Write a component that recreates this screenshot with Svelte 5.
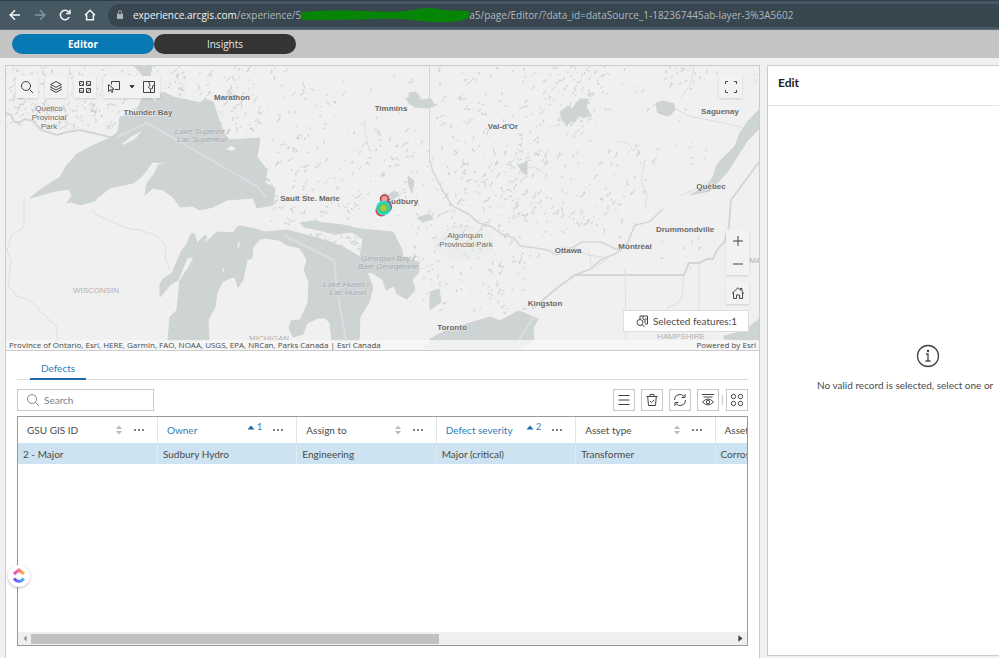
<script>
  const columns = [
    { name: 'GSU GIS ID', value: '2 - Major' },
    { name: 'Owner', value: 'Sudbury Hydro', order: 1 },
    { name: 'Assign to', value: 'Engineering' },
    { name: 'Defect severity', value: 'Major (critical)', order: 2 },
    { name: 'Asset type', value: 'Transformer' },
    { name: 'Asset', value: 'Corrosion' }
  ];

  const labels = [
    { x: 232, y: 100, text: 'Marathon' },
    { x: 148, y: 115, text: 'Thunder Bay' },
    { x: 391, y: 111, text: 'Timmins' },
    { x: 503, y: 129, text: "Val-d'Or" },
    { x: 720, y: 114, text: 'Saguenay' },
    { x: 711, y: 189, text: 'Québec' },
    { x: 310, y: 201, text: 'Sault Ste. Marie' },
    { x: 402, y: 204, text: 'Sudbury' },
    { x: 685, y: 232, text: 'Drummondville' },
    { x: 635, y: 249, text: 'Montréal' },
    { x: 568, y: 253, text: 'Ottawa' },
    { x: 545, y: 306, text: 'Kingston' },
    { x: 452, y: 330, text: 'Toronto' },
    { x: 439, y: 349, text: 'Hamilton', kind: 'state' },
    { x: 96, y: 293, text: 'WISCONSIN', kind: 'state' },
    { x: 681, y: 339, text: 'HAMPSHIRE', kind: 'state' },
    { x: 762, y: 263, text: 'MAINE', kind: 'state' },
    { x: 269, y: 341, text: 'MICHIGAN', kind: 'state' },
    { x: 49, y: 111, text: 'Quetico', kind: 'park' },
    { x: 49, y: 120, text: 'Provincial', kind: 'park' },
    { x: 49, y: 129, text: 'Park', kind: 'park' },
    { x: 465, y: 238, text: 'Algonquin', kind: 'park' },
    { x: 466, y: 247, text: 'Provincial Park', kind: 'park' },
    { x: 202, y: 134, text: 'Lake Superior /', kind: 'water' },
    { x: 202, y: 142, text: 'Lac Supérieur', kind: 'water' },
    { x: 388, y: 261, text: 'Georgian Bay /', kind: 'water' },
    { x: 388, y: 269, text: 'Baie Georgienne', kind: 'water' },
    { x: 346, y: 287, text: 'Lake Huron /', kind: 'water' },
    { x: 348, y: 295, text: 'Lac Huron', kind: 'water' }
  ];

  // Small inland lakes: [x, y, width, height, count]
  const areas = [
    [6, 67, 155, 46, 150], [6, 104, 112, 26, 80], [165, 67, 90, 32, 60],
    [218, 95, 45, 38, 40], [252, 67, 175, 65, 45], [262, 130, 170, 60, 100],
    [270, 188, 150, 34, 80], [300, 232, 62, 18, 60], [430, 67, 160, 75, 100],
    [435, 142, 110, 70, 140], [540, 67, 70, 60, 70], [500, 145, 150, 80, 110],
    [410, 212, 130, 50, 80], [418, 262, 110, 50, 65], [620, 67, 138, 30, 35],
    [645, 105, 65, 60, 20], [540, 210, 90, 30, 30], [660, 235, 60, 35, 10]
  ];

  let seed = 77;
  function rnd() {
    seed = (seed * 16807) % 2147483647;
    return seed / 2147483647;
  }

  let ponds = '';
  for (const [ax, ay, w, h, n] of areas) {
    for (let i = 0; i < n; i++) {
      ponds += `M${(ax + rnd() * w).toFixed(1)} ${(ay + rnd() * h).toFixed(1)}`;
      const steps = 1 + Math.floor(rnd() * rnd() * 5);
      for (let k = 0; k < steps; k++) {
        ponds += `l${(rnd() * 4 - 1.3).toFixed(1)} ${(rnd() * 5 - 3.2).toFixed(1)}`;
      }
    }
  }
</script>

<div class="page">
  <header class="browser">
    <nav class="history" aria-label="Browser">
      <button aria-label="Back"><svg viewBox="0 0 12 12"><path d="M11 6H1.5M6 1.2 1.2 6 6 10.8" /></svg></button>
      <button class="dim" aria-label="Forward"><svg viewBox="0 0 12 12"><path d="M1 6h9.5M6 1.2 10.8 6 6 10.8" /></svg></button>
      <button aria-label="Reload"><svg viewBox="0 0 12 12"><path d="M10.3 8A4.7 4.7 0 1 1 9.5 2.7L11 4.2M11 .7v3.8H7.2" /></svg></button>
      <button aria-label="Home"><svg viewBox="0 0 12 12"><path d="M1 6.2 6 1.3l5 4.9M2.6 5.3v5.5h6.8V5.3" /></svg></button>
    </nav>
    <div class="address">
      <svg class="lock" viewBox="0 0 8 10"><path d="M1 4h6v5H1z" fill="#aeb5b9" /><path d="M2.3 4V2.5a1.7 1.7 0 0 1 3.4 0V4" fill="none" stroke="#aeb5b9" /></svg>
      <span><b>experience.arcgis.com</b>/experience/5</span>
      <svg class="scribble" viewBox="0 0 168 16"><path d="M1 5Q30 2 63 4T112 3Q127-1 142 3L168 4Q172 10 163 13Q145 17 120 14Q102 11 74 12T2 13Q-3 8 1 5Z" fill="#078507" /></svg>
      <span>a5/page/Editor/?data_id=dataSource_1-182367445ab-layer-3%3A5602</span>
    </div>
  </header>

  <nav class="tabs" aria-label="Pages">
    <a class="active" href="#editor">Editor</a>
    <a href="#insights">Insights</a>
  </nav>

  <main>
    <section class="left">
      <div class="map">
        <svg class="canvas" viewBox="6 66 753 284" preserveAspectRatio="xMidYMid slice" role="img" aria-label="Map of the Great Lakes">
          <ellipse cx="465" cy="243" rx="31" ry="18" fill="#ebeeec" />
          <path class="ponds" d={ponds} />
          <g class="border">
            <path d="M429.500 66V160" stroke-width="1" />
            <path d="M429.500 160l3 10 10 20 10 16 16 8 10 9 12 3 11 8 12 4 7 8 15 2 12 2 9 5 12-5 13-8 20 0 12 6 8 3" stroke-width="1.500" />
            <path d="M6 113l5 2 3 7 6 0 5-3 8 2 8 9 16 5 10-3 13-2 30 7 16-2 14-6 17-9 8 4 105 57" />
            <path d="M532 309l25-21 18-13 109 0 5-12 10 0 8-4 6 0 4-9 8-9 4-15 2-26 25-34 5-5" />
            <path d="M575 275l15-6 12-10 13-5 12-10 8-19 14-3 14-13" stroke-width="1.500" />
          </g>
          <g class="border thin">
            <path d="M24 198v29l-13 9-4 15 4 10-3 25 9 10 14 5 12 13 14 13v16M92 210l4 5 34 14 10 1 17 6 9 10-1 12 5 12M625 269l1 70M699 263v77M684 275l-2 22-6 8-8 2v34" />
            <path d="M560 247l15 1 13 7 20 3-16 12-3-18M694 66l-4 20-10 12M674 108l15 8 20 4 24 5 8 2M617 141l12 2 4 8 9-8M645 160l-4 20 6 15-2 14M365 120l0 12 4 18M520 168l15-1 10 7M680 196l18-8 8-6" />
          </g>
          <g class="lake">
            <path d="M30 198 44 187 60 177 67 165 77 154 92 146 110 138 118 132 120 117 136 112 143 97 150 95 154 102 163 92 173 97 187 100 200 103 205 99 213 102 220 123 225 135 230 140 260 138 257 157 267 170 265 183 275 188 273 205 257 208 253 198 227 200 213 207 200 210 192 206 180 207 173 197 163 190 153 188 145 195 147 183 155 173 158 165 168 163 152 162 147 170 140 178 133 183 110 188 97 198 95 201 80 205 71 202 67 203 72 196 69 189 55 191Z" />
            <path d="M168 341 170 317 177 310 180 280 189 267 194 257 187 258 178 280 170 285 160 297 160 284 163 279 172 273 182 250 187 244 191 234 194 233 197 243 205 235 207 237 203 245 217 232 233 233 238 226 260 232 262 237 253 247 252 258 247 260 243 280 238 287 235 277 230 278 222 282 217 293 215 307 208 320 209 341Z" />
            <path d="M240 226 256 229 265 232 287 230 310 236 330 242 345 248 360 257 363 239 352 232 335 234 318 230 304 227 300 223 313 221 325 223 343 225 360 229 393 232 402 250 403 258 419 262 419 272 412 280 415 290 407 299 397 294 394 286 386 290 383 280 373 273 367 272 373 287 369 302 360 317 359 341H332L330 323 325 318 318 318 307 323 303 334 293 337 289 328 291 321 300 320 308 303 309 282 304 270 307 260 300 248 287 245 279 240 265 238 257 240Z" />
            <path d="M428 350 430 339 447 330 470 323 490 317 500 321 518 311 524 313 538 319 533 328 534 340 519 350ZM430 292 439 289 441 302 430 310Z" />
            <path d="M759 110 748 121 740 133 735 146 721 160 717 165 714 175 709 183 696 192 690 195 710 191 728 171 740 152 748 140 759 129Z" />
            <path d="M409 93l6-1 4 3 0 5 12-1 3 5 3 1-9 3-12-1-6-3-4-5 3-2zM656 103l8-2 10 3 1 6-7 6-10-3zM134 66h18l-2 10-5 4-5-8zM724 336l20-5 15-12v22l-35-2zM560 112l8-6 4 3 8-10 8 0-2 9 5 7-8 3-4-4-4 8-5-1-3 5-5-7zM519 166l8-5 0 14-5-3zM408 176l6 5-2 12-3-7zM417 218l12-4 4 5-10 3zM385 197l9-6 5 3-7 7z" />
          </g>
          <g class="island">
            <path d="M122 144l10-8 10-5-7 8-12 6zM226 149l5-3 5 2-4 3zM237 245l3-4-1 8zM275 218l8 4 6 8-6-2-8-7zM332 235l10 4 7 7-6-1-13-7zM222 270l2-2 0 5z" />
            <path class="route" d="M117 137l30-14 111 64 8 10M283 235l51 25 3 30 9 50M519 340l15-24" />
          </g>
          {#each labels as l}
            <text x={l.x} y={l.y} class={l.kind ?? 'city'}>{l.text}</text>
          {/each}
          <circle cx="384.500" cy="199" r="4" fill="#f49a94" stroke="#a8383f" stroke-width="1.500" />
          <circle cx="381.500" cy="210.500" r="6" fill="#e04444" />
          <circle cx="386" cy="207" r="6" fill="#b4403e" />
          <circle cx="383.500" cy="208" r="6.500" fill="#35c98f" stroke="#1fe2e4" stroke-width="1.500" />
          <circle cx="383.500" cy="208" r="3.500" fill="#a8c93c" stroke="#72c45b" />
        </svg>

        <div class="tools">
          <button aria-label="Search"><svg viewBox="0 0 14 14"><circle cx="6" cy="6" r="4.500" /><path d="m9.300 9.300 3.700 3.700" /></svg></button>
          <button aria-label="Layers"><svg viewBox="0 0 14 14"><path d="m7 1.500 5.500 3L7 7.300 1.500 4.500zM2.500 6.500l-1 .6L7 10l5.500-2.900-1-.6M2.500 8.900l-1 .6L7 12.400l5.500-2.900-1-.6" /></svg></button>
          <button aria-label="Basemaps"><svg viewBox="0 0 14 14"><path d="M1.500 1.500h4v4h-4zM8.500 1.500h4v4h-4zM1.500 8.500h4v4h-4zM8.500 8.500h4v4h-4z" /><path d="M2 4l2-2M3.500 5.500l2-2M9 3l3 2M2 10l3 2M9 12l3-3" stroke-width=".7" /></svg></button>
          <div class="group">
            <button aria-label="Select"><svg viewBox="0 0 14 14"><path d="M4.500 4.500v-3h8v8H8M1.500 4.500v7l2-1.700 1.300 2.700 1.200-.6-1.300-2.600h2.500z" /></svg></button>
            <button class="drop" aria-label="Selection tools"><svg viewBox="0 0 14 14"><path d="M5 5.500h4L7 8z" fill="#333" /></svg></button>
            <button aria-label="Clear selection"><svg viewBox="0 0 14 14"><path d="M1.500 1.500h11v11h-11zM6.500 1.500 8 5 6.500 7.500l2 1.500v3.500M12.500 5 10.500 6v2.500l-2 .5" /></svg></button>
          </div>
        </div>
        <button class="float full" aria-label="Full screen"><svg viewBox="0 0 14 14"><path d="M1.500 4V1.500H4M10 1.500h2.500V4M12.500 10v2.500H10M4 12.500H1.500V10" /></svg></button>
        <div class="side">
          <div class="zoom">
            <button aria-label="Zoom in"><svg viewBox="0 0 14 14"><path d="M7 2v10M2 7h10" /></svg></button>
            <button aria-label="Zoom out"><svg viewBox="0 0 14 14"><path d="M2 7h10" /></svg></button>
          </div>
          <button class="float" aria-label="Default extent"><svg viewBox="0 0 14 14"><path d="M1 7.500 7 1.700l2.500 2.500V2.500h1.500v3.200l2 1.800M2.500 6.500v6h3V9h3v3.500h3v-6" /></svg></button>
        </div>
        <button class="selected"><svg viewBox="0 0 14 14"><path d="M5 5V2h7.500v8H10M8 2v3l2 1v3M12.500 5H10" /><circle cx="5" cy="8.500" r="3" /><path d="m7.200 10.700 2.300 2.300" /></svg>Selected features:1</button>
        <div class="credit"><span>Province of Ontario, Esri, HERE, Garmin, FAO, NOAA, USGS, EPA, NRCan, Parks Canada | Esri Canada</span><span>Powered by Esri</span></div>
      </div>

      <div class="records">
        <div class="sheets" role="tablist"><button role="tab" aria-selected="true">Defects</button></div>
        <div class="bar">
          <label class="search"><svg viewBox="0 0 14 14"><circle cx="6" cy="6" r="4.500" /><path d="m9.300 9.300 3.700 3.700" /></svg><input type="search" placeholder="Search" aria-label="Search" /></label>
          <div class="actions">
            <button aria-label="Menu"><svg viewBox="0 0 14 14"><path d="M1.500 2.500h11M1.500 7h11M1.500 11.500h11" /></svg></button>
            <button aria-label="Clear selection"><svg viewBox="0 0 14 14"><path d="M1.500 3.500h11M5 3.500v-2h4v2M2.700 3.500l.8 9h7l.8-9M5 8l1.500 1.500L9.200 6.800" /></svg></button>
            <button aria-label="Refresh"><svg viewBox="0 0 14 14"><path d="M1.500 7A5.300 5.300 0 0 1 11 3.500M12.500 7A5.300 5.300 0 0 1 3 10.500M12 1v3.500H8.500M2 13V9.500h3.500" /></svg></button>
            <button aria-label="Show columns"><svg viewBox="0 0 14 14"><path d="M1 1.500h12M2.500 4h9M1.500 9q5.500-6 11 0-5.500 6-11 0z" /><circle cx="7" cy="9" r="1.700" /></svg></button>
            <i></i>
            <button aria-label="More actions"><svg viewBox="0 0 14 14"><circle cx="3.500" cy="3.500" r="2.200" /><circle cx="10.500" cy="3.500" r="2.200" /><circle cx="3.500" cy="10.500" r="2.200" /><circle cx="10.500" cy="10.500" r="2.200" /></svg></button>
          </div>
        </div>
        <div class="grid">
          <div class="rows">
            <table>
              <thead>
                <tr>
                  {#each columns as c}
                    <th class:sorted={c.order}>
                      <div>
                        <span class="name">{c.name}</span>
                        {#if c.order}
                          <button class="order" aria-label="Sorted ascending"><svg viewBox="0 0 8 5"><path d="M.5 4.500 4 .5l3.500 4z" /></svg>{c.order}</button>
                        {:else}
                          <button class="sort" aria-label="Sort"><svg viewBox="0 0 8 10"><path d="M1 4 4 .5 7 4zM1 6l3 3.500L7 6z" /></svg></button>
                        {/if}
                        <button class="more" aria-label="Column options"><svg viewBox="0 0 12 4"><circle cx="2" cy="2" r="1" /><circle cx="6" cy="2" r="1" /><circle cx="10" cy="2" r="1" /></svg></button>
                      </div>
                    </th>
                  {/each}
                </tr>
              </thead>
              <tbody>
                <tr>{#each columns as c}<td>{c.value}</td>{/each}</tr>
              </tbody>
            </table>
          </div>
          <div class="scroll">
            <svg viewBox="0 0 12 12"><path d="M8 3 5 6l3 3z" fill="#999" /></svg>
            <div class="track"><div class="thumb"></div></div>
            <svg viewBox="0 0 12 12"><path d="m4 3 4 3-4 3z" fill="#444" /></svg>
          </div>
        </div>
      </div>
      <button class="badge" aria-label="ClickUp">
        <svg viewBox="0 0 14 16">
          <defs>
            <linearGradient id="warm"><stop stop-color="#e83fd2" /><stop offset="1" stop-color="#ffb52e" /></linearGradient>
            <linearGradient id="cool"><stop stop-color="#7548ee" /><stop offset="1" stop-color="#49b7f8" /></linearGradient>
          </defs>
          <path d="m2 6 5-4 5 4" stroke="url(#warm)" /><path d="M2 10.500q5 6 10 0" stroke="url(#cool)" />
        </svg>
      </button>
    </section>

    <aside>
      <h2>Edit</h2>
      <div class="empty">
        <svg viewBox="0 0 24 24"><circle cx="12" cy="12" r="10.500" /><path d="M10 10h2v7M9.500 17h5" /><circle cx="12" cy="7" r=".6" /></svg>
        <p>No valid record is selected, select one or</p>
      </div>
    </aside>
  </main>
</div>

<style>
  :global(body) { margin: 0; }
  * { box-sizing: border-box; }
  .page { height: 100vh; display: flex; flex-direction: column; overflow: hidden; background: #f0f0f0; color: #4a4a4a; font: 10px/16px Lato, "Open Sans", sans-serif; }
  button { padding: 0; border: 0; background: none; font: inherit; color: inherit; display: flex; align-items: center; justify-content: center; }
  svg { display: block; flex: none; }
  button svg { width: 14px; height: 14px; fill: none; stroke: #444; stroke-width: 1; }

  .browser { flex: none; height: 30px; display: flex; align-items: center; border-top: 1px solid #2d4049; border-bottom: 1px solid #5a6b75; background: #465963; }
  .history { display: flex; gap: 13px; padding: 0 12px 0 9px; }
  .history svg { width: 12px; height: 12px; stroke: #f2f4f5; stroke-width: 1.5; }
  .history .dim svg { stroke: #84929a; }
  .address { flex: 1; min-width: 0; height: 23px; display: flex; align-items: center; padding-left: 8px; border-radius: 12px 0 0 12px; background: #38464f; color: #b0b8bd; font: 10px/14px "Open Sans", "Noto Sans", sans-serif; white-space: nowrap; }
  .address b { font-weight: 400; color: #f5f5f5; }
  .lock { width: 8px; height: 10px; margin-right: 9px; }
  .scribble { width: 168px; height: 16px; }

  .tabs { flex: none; height: 28px; display: flex; align-items: center; padding-left: 12px; background: #c4c4c4; }
  .tabs a { width: 142px; height: 20px; border-radius: 10px; background: #343434; color: #e8e8e8; font: 10px/20px "Open Sans", sans-serif; text-align: center; text-decoration: none; }
  .tabs .active { background: #0879b3; color: #fff; font-weight: 700; }

  main { flex: 1; min-height: 0; display: grid; grid-template-columns: 755fr 232fr; gap: 7px; padding: 7px 0 0 5px; }
  .left { position: relative; min-width: 0; display: flex; flex-direction: column; border: 1px solid #ccc; border-bottom: 0; background: #fff; }
  .map { position: relative; flex: none; height: 285px; overflow: hidden; border-bottom: 1px solid #ccc; background: #f0f0f0; }
  .canvas { width: 100%; height: 100%; }
  .ponds { fill: none; stroke: #cbd0d1; stroke-width: 1; }
  .border { fill: none; stroke: #d3d5d6; stroke-width: 2; }
  .thin { stroke-width: 1; stroke: #dcdedf; }
  .lake { fill: #ced3d4; stroke: #ced3d4; stroke-linejoin: round; }
  .island { fill: #f0f0f0; }
  .route { fill: none; stroke: #dadedf; stroke-width: 2; }
  text { font: 8px "Liberation Sans", sans-serif; text-anchor: middle; fill: #5c5c5c; paint-order: stroke; stroke: #f2f2f2; stroke-width: 1; }
  .city { font-weight: 700; fill: #6a6a6a; }
  .state { fill: #b0b0b0; }
  .park { fill: #666b66; }
  .water { font-style: italic; fill: #9fa5a8; stroke: #dde0e1; }

  .tools { position: absolute; left: 10px; top: 10px; display: flex; gap: 7px; }
  .tools button { width: 22px; height: 22px; background: #f2f2f2; }
  .tools > button, .group, .zoom, .float { background: #f2f2f2; box-shadow: 0 1px 2px #0002; }
  .group { display: flex; }
  .tools .drop { width: 13px; }
  .float { width: 23px; height: 23px; }
  .full { position: absolute; right: 17px; top: 9px; }
  .side { position: absolute; right: 10px; top: 163px; display: grid; gap: 6px; }
  .zoom button { width: 23px; height: 23px; }
  .selected { position: absolute; right: 10px; bottom: 18px; height: 22px; padding: 0 11px; gap: 4px; border: 1px solid #ddd; background: #fff; }
  .credit { position: absolute; inset: auto 0 0; display: flex; justify-content: space-between; padding: 0 3px; background: #f7f7f7cc; font: 8px/10px "Open Sans", sans-serif; }

  .records { flex: 1; min-height: 0; display: flex; flex-direction: column; padding: 6px 11px 12px; }
  .sheets { display: flex; padding-left: 13px; border-bottom: 1px solid #ddd; }
  .sheets button { height: 23px; padding: 0 11px; margin-bottom: -1px; border-bottom: 2px solid #2369a8; color: #2f7cb8; }
  .bar { display: flex; justify-content: space-between; padding: 9px 0 5px; }
  .search { display: flex; align-items: center; width: 137px; height: 22px; padding-left: 8px; gap: 4px; border: 1px solid #c8c8c8; }
  .search svg { width: 14px; height: 14px; fill: none; stroke: #8a8a8a; }
  .search input { width: 100px; min-width: 0; padding: 0; border: 0; outline: 0; background: none; font: inherit; }
  .search input::placeholder { color: #828282; }
  .actions { display: flex; gap: 6px; }
  .actions button { width: 22px; height: 22px; border: 1px solid #c8c8c8; }
  .actions i { width: 1px; height: 10px; margin: 6px -3px; background: #ccc; }
  .grid { flex: 1; min-height: 0; display: flex; flex-direction: column; border: 1px solid #999; }
  .rows { flex: 1; min-height: 0; overflow: hidden; }
  table { width: 837px; table-layout: fixed; border-collapse: collapse; }
  th, td { padding: 0 6px 0 5px; border-right: 1px solid #e4e4e4; text-align: left; font-weight: 400; }
  th { height: 26px; padding: 0 12px 0 9px; }
  th div { display: flex; align-items: center; }
  .name { flex: 1; min-width: 0; white-space: nowrap; }
  .sorted { color: #2f7cb8; }
  .sort svg { width: 8px; height: 10px; fill: #bbb; stroke: none; }
  .order { align-self: flex-start; gap: 2px; font-size: 9px; line-height: 10px; }
  .order svg { width: 8px; height: 5px; fill: #176ca8; stroke: none; }
  .more { margin-left: 10px; }
  .more svg { width: 12px; height: 4px; fill: #555; stroke: none; }
  td { height: 21px; border-color: #dcebf5; background: #cde3f1; }
  .scroll { flex: none; height: 13px; display: flex; align-items: center; background: #f0f0f0; }
  .scroll svg { width: 13px; height: 13px; }
  .track { flex: 1; }
  .thumb { width: 58%; height: 10px; background: #c1c1c1; }
  .badge { position: absolute; left: 2px; bottom: 71px; width: 22px; height: 22px; border-radius: 50%; background: #fff; box-shadow: 0 1px 3px #0004; }
  .badge svg { width: 14px; height: 16px; stroke-width: 3; }

  aside { min-width: 0; margin-bottom: 2px; display: flex; flex-direction: column; overflow: hidden; border: 1px solid #ccc; border-right: 0; background: #fff; }
  h2 { margin: 0; height: 40px; padding: 0 10px; border-bottom: 1px solid #e2e2e2; color: #222; font: 700 12px/34px Lato, sans-serif; }
  .empty { flex: 1; width: 320px; display: flex; flex-direction: column; align-items: center; justify-content: center; gap: 9px; padding-bottom: 24px; }
  .empty svg { width: 24px; height: 24px; fill: none; stroke: #444; stroke-width: 1.3; }
  .empty p { width: 222px; margin: 0; white-space: nowrap; }
</style>
